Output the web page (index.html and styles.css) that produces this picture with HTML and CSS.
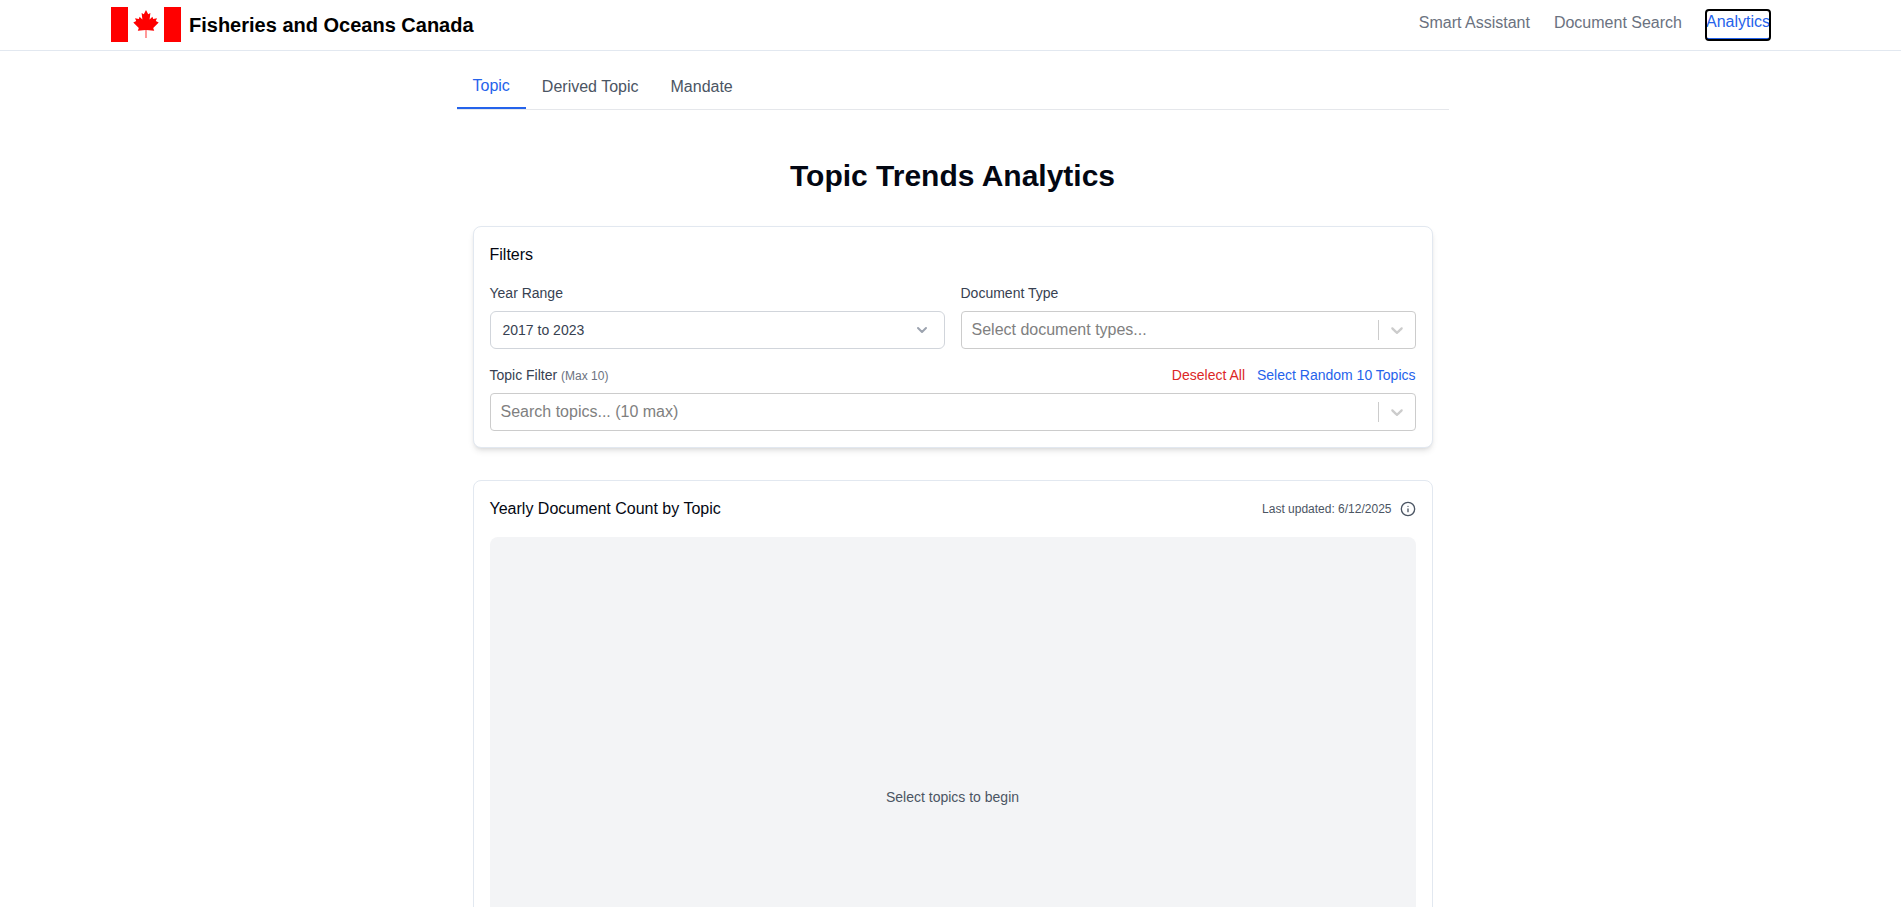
FILE: index.html
```html
<!DOCTYPE html>
<html lang="en">
<head>
<meta charset="UTF-8">
<meta name="viewport" content="width=device-width, initial-scale=1.0">
<title>Topic Trends Analytics</title>
<link rel="stylesheet" href="styles.css">
</head>
<body>
<header class="site-header">
    <a class="brand" href="#">
        <svg class="brand-flag" viewBox="0 0 70 35" width="70" height="35" aria-hidden="true">
            <rect width="17" height="35" fill="#ff0000"></rect>
            <rect x="53" width="17" height="35" fill="#ff0000"></rect>
            <polygon fill="#ff0000" points="35,3 32.8,7.2 30.6,6 31.4,12.5 28.6,9.8 27.8,12 24,11.2 25.2,14 22.3,15.5 27.8,21 26.8,23.8 34.6,23 34.6,31 35.4,31 35.4,23 43.2,23.8 42.2,21 47.7,15.5 44.8,14 46,11.2 42.2,12 41.4,9.8 38.6,12.5 39.4,6 37.2,7.2"></polygon>
        </svg>
        <span class="brand-name">Fisheries and Oceans Canada</span>
    </a>
    <nav class="site-nav">
        <a href="#">Smart Assistant</a>
        <a href="#">Document Search</a>
        <a href="#" class="active">Analytics</a>
    </nav>
</header>

<main class="content">
    <div class="tabs">
        <a href="#" class="tab active">Topic</a>
        <a href="#" class="tab">Derived Topic</a>
        <a href="#" class="tab">Mandate</a>
    </div>

    <h1 class="page-title">Topic Trends Analytics</h1>

    <section class="card filters-card">
        <h2 class="card-title">Filters</h2>
        <div class="filter-grid">
            <div class="field">
                <label class="field-label">Year Range</label>
                <div class="native-select">
                    <span>2017 to 2023</span>
                    <svg viewBox="0 0 20 20" width="20" height="20" fill="none" stroke="#9ca3af" stroke-width="2" stroke-linecap="round" stroke-linejoin="round" aria-hidden="true"><path d="m6 8 4 4 4-4"></path></svg>
                </div>
            </div>
            <div class="field">
                <label class="field-label">Document Type</label>
                <div class="combo">
                    <span class="combo-placeholder">Select document types...</span>
                    <span class="combo-sep"></span>
                    <svg class="combo-arrow" viewBox="0 0 20 20" width="20" height="20" aria-hidden="true"><path d="M4.516 7.548c0.436-0.446 1.043-0.481 1.576 0l3.908 3.747 3.908-3.747c0.533-0.481 1.141-0.446 1.574 0 0.436 0.445 0.408 1.197 0 1.615-0.406 0.418-4.695 4.502-4.695 4.502-0.217 0.223-0.502 0.335-0.787 0.335s-0.57-0.112-0.789-0.335c0 0-4.287-4.084-4.695-4.502s-0.436-1.17 0-1.615z"></path></svg>
                </div>
            </div>
        </div>
        <div class="topic-filter">
            <div class="topic-row">
                <label class="field-label">Topic Filter <span class="hint">(Max 10)</span></label>
                <div class="topic-actions">
                    <a href="#" class="link-red">Deselect All</a>
                    <a href="#" class="link-blue">Select Random 10 Topics</a>
                </div>
            </div>
            <div class="combo">
                <span class="combo-placeholder">Search topics... (10 max)</span>
                <span class="combo-sep"></span>
                <svg class="combo-arrow" viewBox="0 0 20 20" width="20" height="20" aria-hidden="true"><path d="M4.516 7.548c0.436-0.446 1.043-0.481 1.576 0l3.908 3.747 3.908-3.747c0.533-0.481 1.141-0.446 1.574 0 0.436 0.445 0.408 1.197 0 1.615-0.406 0.418-4.695 4.502-4.695 4.502-0.217 0.223-0.502 0.335-0.787 0.335s-0.57-0.112-0.789-0.335c0 0-4.287-4.084-4.695-4.502s-0.436-1.17 0-1.615z"></path></svg>
            </div>
        </div>
    </section>

    <section class="card chart-card">
        <div class="chart-head">
            <h2 class="card-title">Yearly Document Count by Topic</h2>
            <div class="chart-meta">
                <span>Last updated: 6/12/2025</span>
                <svg viewBox="0 0 24 24" width="16" height="16" fill="none" stroke="#4b5563" stroke-width="2" stroke-linecap="round" aria-hidden="true"><circle cx="12" cy="12" r="10"></circle><path d="M12 16v-4"></path><path d="M12 8h.01"></path></svg>
            </div>
        </div>
        <div class="chart-empty">Select topics to begin</div>
    </section>
</main>
</body>
</html>
```

FILE: styles.css
```css
html, body {
    height: 100%;
    overflow: hidden;
}

body {
    margin: 0;
    font-family: "Liberation Sans", Arial, sans-serif;
    font-size: 16px;
    line-height: 24px;
    background-color: #fff;
    color: #030712;
}

a {
    text-decoration: none;
}

.site-header {
    display: flex;
    justify-content: space-between;
    align-items: center;
    height: 50px;
    padding: 0 131px 0 111px;
    border-bottom: 1px solid #e2e8f0;
}

.brand {
    display: flex;
    align-items: center;
    gap: 8px;
    margin-top: -1px;
    color: #000;
}

.brand-flag {
    display: block;
}

.brand-name {
    font-size: 20px;
    font-weight: 700;
}

.site-nav {
    display: flex;
    gap: 24px;
}

.site-nav a {
    color: #6b7280;
    padding: 1px 0 5px;
}

.site-nav a.active {
    color: #2563eb;
    padding: 0 0 4px;
    border-bottom: 2px solid #2563eb;
    border-radius: 3px;
    outline: 2px solid #000;
    outline-offset: -1px;
}

.content {
    width: 992px;
    margin-left: 456.5px;
    padding-top: 12px;
}

.tabs {
    display: flex;
    border-bottom: 1px solid #e5e7eb;
}

.tab {
    padding: 12px 16px 8px;
    border-bottom: 2px solid transparent;
    color: #4b5563;
}

.tab.active {
    padding: 11px 16px 9px;
    border-bottom-color: #2563eb;
    color: #2563eb;
}

.page-title {
    margin: 48px 0 32px;
    font-size: 30px;
    line-height: 36px;
    font-weight: 700;
    text-align: center;
}

.card {
    margin: 0 16px;
    padding: 16px;
    background-color: #fff;
    border: 1px solid #e2e8f0;
    border-radius: 8px;
}

.filters-card {
    margin-bottom: 32px;
    box-shadow: 0 4px 6px -1px rgba(0, 0, 0, 0.1), 0 2px 4px -2px rgba(0, 0, 0, 0.1);
}

.card-title {
    margin: 0;
    font-size: 16px;
    line-height: 24px;
    font-weight: 400;
}

.filter-grid {
    display: grid;
    grid-template-columns: 1fr 1fr;
    gap: 16px;
    margin-top: 16px;
}

.field-label {
    display: block;
    font-size: 14px;
    line-height: 20px;
    color: #374151;
}

.field .field-label {
    margin-bottom: 8px;
}

.hint {
    font-size: 12px;
    line-height: 1;
    color: #6b7280;
}

.native-select {
    display: flex;
    justify-content: space-between;
    align-items: center;
    height: 38px;
    box-sizing: border-box;
    padding: 0 12px;
    border: 1px solid #d1d5db;
    border-radius: 6px;
    font-size: 14px;
    color: #374151;
}

.combo {
    display: flex;
    align-items: center;
    height: 38px;
    box-sizing: border-box;
    padding-left: 10px;
    padding-right: 8px;
    border: 1px solid #ccc;
    border-radius: 4px;
}

.combo-placeholder {
    flex: 1;
    color: #808080;
}

.combo-sep {
    width: 1px;
    height: 20px;
    margin-right: 8px;
    background-color: #ccc;
}

.combo-arrow {
    fill: #ccc;
}

.topic-filter {
    margin-top: 16px;
}

.topic-row {
    display: flex;
    justify-content: space-between;
    margin-bottom: 8px;
}

.topic-actions {
    display: flex;
    gap: 12px;
    font-size: 14px;
    line-height: 20px;
}

.link-red {
    color: #dc2626;
}

.link-blue {
    color: #2563eb;
}

.chart-head {
    display: flex;
    justify-content: space-between;
    align-items: center;
    margin-bottom: 16px;
}

.chart-meta {
    display: flex;
    align-items: center;
    gap: 8px;
    font-size: 12px;
    color: #4b5563;
}

.chart-empty {
    display: flex;
    justify-content: center;
    align-items: center;
    height: 520px;
    border-radius: 8px;
    background-color: #f3f4f6;
    font-size: 14px;
    color: #4b5563;
}
```
